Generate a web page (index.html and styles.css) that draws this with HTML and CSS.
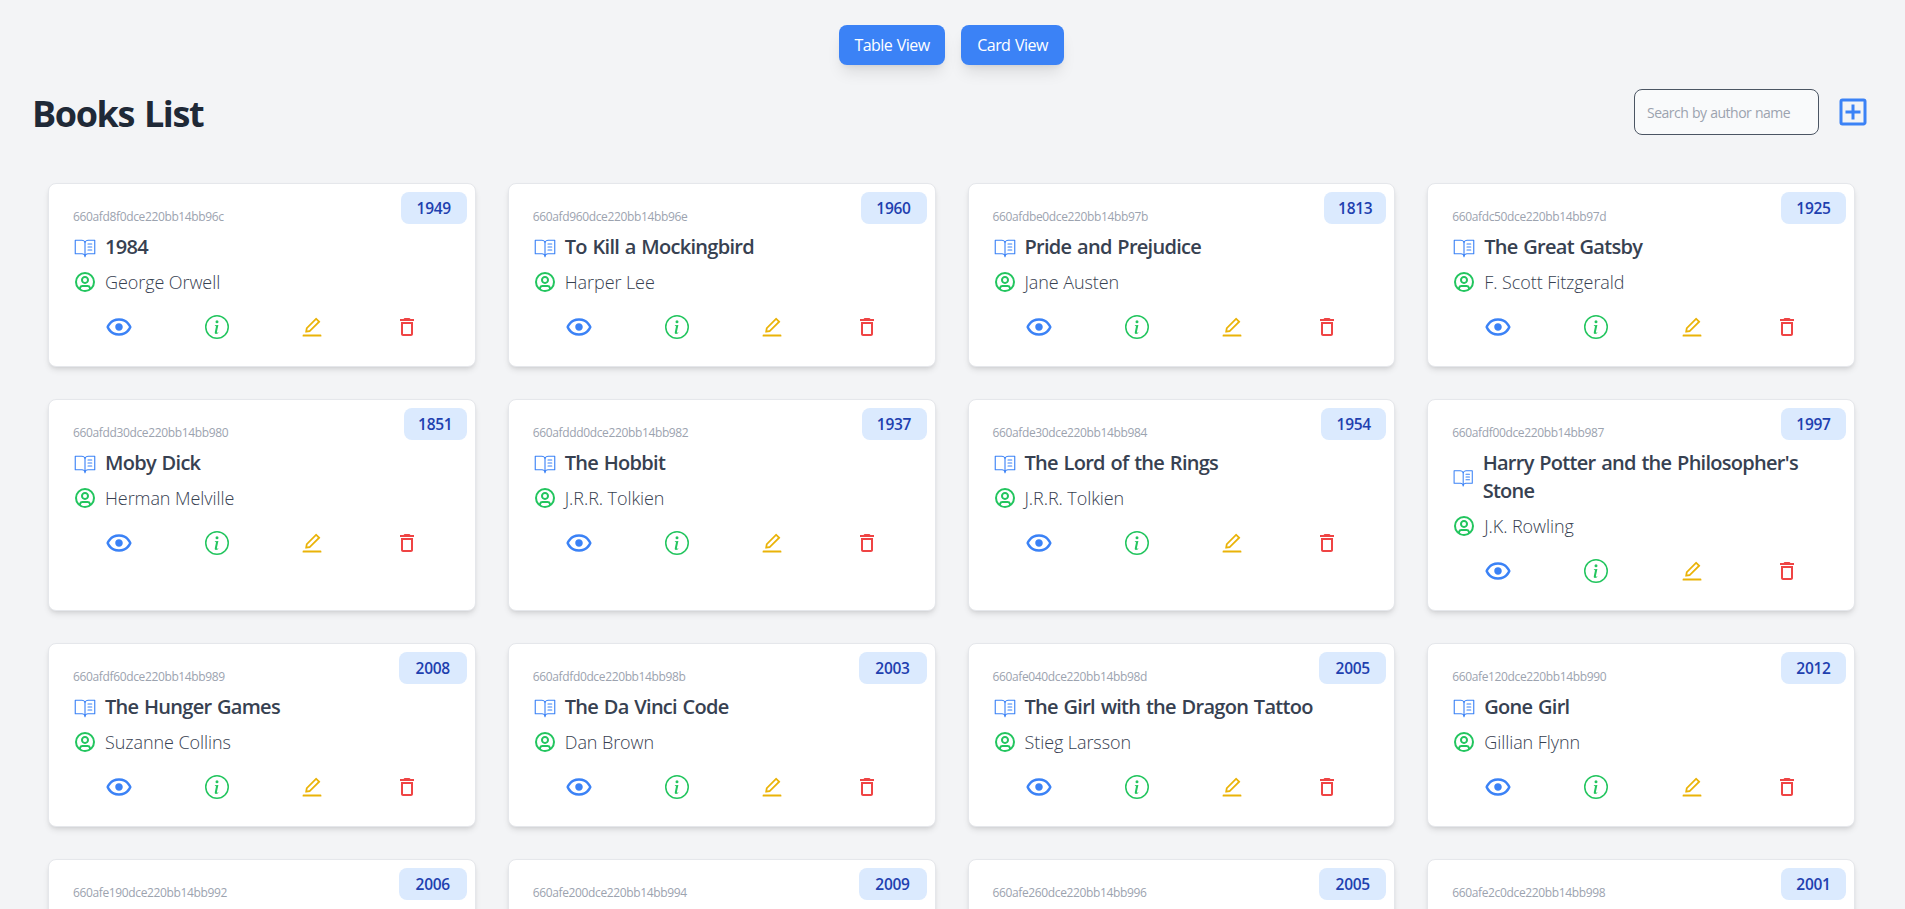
FILE: index.html
```
<!DOCTYPE html>
<html lang="en">
<head>
<meta charset="utf-8">
<title>Books List</title>
<link rel="stylesheet" href="styles.css">
</head>
<body>
<svg class="sprite" aria-hidden="true">
  <symbol id="book" viewBox="0 0 256 256"><path d="M232 50h-72a38 38 0 0 0-32 17.550A38 38 0 0 0 96 50H24a6 6 0 0 0-6 6v144a6 6 0 0 0 6 6h72a26 26 0 0 1 26 26 6 6 0 0 0 12 0 26 26 0 0 1 26-26h72a6 6 0 0 0 6-6V56a6 6 0 0 0-6-6ZM96 194H30V62h66a26 26 0 0 1 26 26v116.310A37.860 37.860 0 0 0 96 194Zm130 0h-66a37.870 37.870 0 0 0-26 10.320V88a26 26 0 0 1 26-26h66ZM160 90h40a6 6 0 0 1 0 12h-40a6 6 0 0 1 0-12Zm46 38a6 6 0 0 1-6 6h-40a6 6 0 0 1 0-12h40a6 6 0 0 1 6 6Zm0 32a6 6 0 0 1-6 6h-40a6 6 0 0 1 0-12h40a6 6 0 0 1 6 6Z"/></symbol>
  <symbol id="person" viewBox="0 0 24 24"><path d="M12 2a10 10 0 1 0 0 20 10 10 0 0 0 0-20zM8 18.900V18.500c0-.830.670-1.500 1.500-1.500h5c.830 0 1.500.670 1.500 1.500v.430a7.950 7.950 0 0 1-8-.030zm9.900-1.490A3.500 3.500 0 0 0 14.500 15h-5a3.500 3.500 0 0 0-3.400 2.410A8 8 0 1 1 17.900 17.410zM12 6a3.910 3.910 0 0 0-4 4 3.910 3.910 0 0 0 4 4 3.910 3.910 0 0 0 4-4 3.910 3.910 0 0 0-4-4zm0 6a1.910 1.910 0 0 1-2-2 1.910 1.910 0 0 1 2-2 1.910 1.910 0 0 1 2 2 1.910 1.910 0 0 1-2 2z"/></symbol>
  <symbol id="eye" viewBox="0 0 24 24"><path d="M12 9a3.020 3.020 0 0 0-3 3c0 1.642 1.358 3 3 3 1.641 0 3-1.358 3-3 0-1.641-1.359-3-3-3z"/><path d="M12 5c-7.633 0-9.927 6.617-9.948 6.684L1.946 12l.105.316C2.073 12.383 4.367 19 12 19s9.927-6.617 9.948-6.684l.106-.316-.105-.316C21.927 11.617 19.633 5 12 5zm0 12c-5.351 0-7.424-3.846-7.926-5C4.578 10.842 6.652 7 12 7c5.351 0 7.424 3.846 7.926 5-.504 1.158-2.578 5-7.926 5z"/></symbol>
  <symbol id="info" viewBox="0 0 16 16"><path d="M8 15A7 7 0 1 1 8 1a7 7 0 0 1 0 14zm0 1A8 8 0 1 0 8 0a8 8 0 0 0 0 16z"/><path d="m8.930 6.588-2.290.287-.082.380.450.083c.294.070.352.176.288.469l-.738 3.468c-.194.897.105 1.319.808 1.319.545 0 1.178-.252 1.465-.598l.088-.416c-.2.176-.492.246-.686.246-.275 0-.375-.193-.304-.533L8.930 6.588zM9 4.500a1 1 0 1 1-2 0 1 1 0 0 1 2 0z"/></symbol>
  <symbol id="edit" viewBox="0 0 1024 1024"><path d="M257.7 752c2 0 4-.2 6-.5L431.9 722c2-.4 3.900-1.300 5.300-2.800l423.900-423.900a9.960 9.960 0 0 0 0-14.100L694.900 114.900c-1.900-1.900-4.400-2.900-7.100-2.900s-5.200 1-7.100 2.900L256.800 538.800c-1.500 1.500-2.400 3.300-2.800 5.300l-29.500 168.200a33.500 33.500 0 0 0 9.400 29.800c6.600 6.400 14.900 9.900 23.800 9.900zm67.400-174.400L687.800 215l73.300 73.300-362.700 362.600-88.900 15.700 15.600-89zM880 836H144c-17.700 0-32 14.300-32 32v36c0 4.400 3.600 8 8 8h784c4.400 0 8-3.600 8-8v-36c0-17.700-14.300-32-32-32z"/></symbol>
  <symbol id="trash" viewBox="0 0 24 24"><path d="M6 19c0 1.100.900 2 2 2h8c1.100 0 2-.900 2-2V7H6v12zM8 9h8v10H8V9zm7.500-5-1-1h-5l-1 1H5v2h14V4z"/></symbol>
</svg>
<nav class="views"><button class="view-btn">Table View</button><button class="view-btn view-btn-card">Card View</button></nav>
<header class="header">
  <h1 class="heading">Books List</h1>
  <div class="tools">
    <input class="search" type="text" placeholder="Search by author name">
    <svg class="add" viewBox="0 0 24 24"><path d="M19 3H5a2 2 0 0 0-2 2v14a2 2 0 0 0 2 2h14c1.100 0 2-.900 2-2V5a2 2 0 0 0-2-2zm0 16H5V5h14v14zm-8-2h2v-4h4v-2h-4V7h-2v4H7v2h4z"/></svg>
  </div>
</header>
<main class="grid" id="grid"></main>
<script src="books.js"></script>
</body>
</html>
```
FILE: styles.css
```
* { box-sizing: border-box; }
html { background: #f3f4f6; }
body {
  margin: 0;
  height: 909px;
  overflow: hidden;
  padding: 25px 34px 0 32px;
  background: #f3f4f6;
  font-family: "Open Sans", "Noto Sans", sans-serif;
  font-size: 16px;
  line-height: 24px;
}
svg { display: block; fill: currentColor; flex: none; }
.sprite { position: absolute; width: 0; height: 0; }
.views { display: flex; justify-content: center; gap: 16px; }
.view-btn {
  width: 106px;
  height: 40px;
  padding: 0;
  border: 0;
  border-radius: 8px;
  background: #3b82f6;
  color: #fff;
  font: inherit;
  letter-spacing: -0.55px;
  word-spacing: 1px;
  box-shadow: 0 10px 15px -3px rgba(0,0,0,.1), 0 4px 6px -4px rgba(0,0,0,.1);
}
.view-btn-card { width: 103px; }
.header { display: flex; justify-content: space-between; align-items: center; height: 94px; }
.heading { margin: 4px 0 0; font-size: 36px; line-height: 40px; font-weight: 700; color: #1f2937; letter-spacing: -1.4px; word-spacing: 2px; }
.tools { display: flex; align-items: center; gap: 16px; }
.search {
  width: 185px;
  height: 46px;
  padding: 0 12px;
  border: 1px solid #4b5563;
  border-radius: 8px;
  background: #f9fafb;
  font: 14px "Open Sans", sans-serif;
  letter-spacing: -0.5px;
  word-spacing: 0.5px;
}
.search::placeholder { color: #9ca3af; opacity: 1; }
.add { width: 36px; height: 36px; color: #3b82f6; }
.grid {
  display: grid;
  grid-template-columns: repeat(4, minmax(0, 1fr));
  gap: 32px;
  padding: 24px 16px;
}
.card {
  position: relative;
  min-height: 184px;
  padding: 25px 24px 24px;
  border: 1px solid #e5e7eb;
  border-radius: 8px;
  background: #fff;
  box-shadow: 0 4px 6px -1px rgba(0,0,0,.1), 0 2px 4px -2px rgba(0,0,0,.1);
}
.year {
  position: absolute;
  top: 8px;
  right: 8px;
  height: 32px;
  border-radius: 8px;
  background: #dbeafe;
  color: #1e40af;
  font-weight: 600;
  font-size: 15.5px;
  line-height: 33px;
  text-align: center;
  letter-spacing: -0.3px;
}
.id { font-size: 12px; line-height: 16px; color: #9ca3af; letter-spacing: -0.36px; }
.row { display: flex; align-items: center; gap: 8px; margin-top: 8px; }
.row + .row { margin-top: 7px; }
.row svg { width: 24px; height: 24px; flex-shrink: 1; }
.title { font-size: 20px; line-height: 28px; font-weight: 600; color: #374151; letter-spacing: -0.72px; word-spacing: 1.2px; }
.author { font-size: 18px; line-height: 28px; font-weight: 300; color: #374151; letter-spacing: -0.08px; }
.blue { color: #3b82f6; }
.green { color: #22c55e; }
.yellow { color: #eab308; }
.red { color: #ef4444; }
.actions { display: flex; justify-content: space-between; align-items: center; margin-top: 16px; padding: 0 31.4px 0 31.2px; }
```
FILE: books.js
```
const books = [
  ["660afd8f0dce220bb14bb96c", "1984", "George Orwell", 1949, 66],
  ["660afd960dce220bb14bb96e", "To Kill a Mockingbird", "Harper Lee", 1960, 66],
  ["660afdbe0dce220bb14bb97b", "Pride and Prejudice", "Jane Austen", 1813, 62],
  ["660afdc50dce220bb14bb97d", "The Great Gatsby", "F. Scott Fitzgerald", 1925, 65],
  ["660afdd30dce220bb14bb980", "Moby Dick", "Herman Melville", 1851, 63],
  ["660afddd0dce220bb14bb982", "The Hobbit", "J.R.R. Tolkien", 1937, 65],
  ["660afde30dce220bb14bb984", "The Lord of the Rings", "J.R.R. Tolkien", 1954, 65],
  ["660afdf00dce220bb14bb987", "Harry Potter and the Philosopher's Stone", "J.K. Rowling", 1997, 65],
  ["660afdf60dce220bb14bb989", "The Hunger Games", "Suzanne Collins", 2008, 68],
  ["660afdfd0dce220bb14bb98b", "The Da Vinci Code", "Dan Brown", 2003, 68],
  ["660afe040dce220bb14bb98d", "The Girl with the Dragon Tattoo", "Stieg Larsson", 2005, 67],
  ["660afe120dce220bb14bb990", "Gone Girl", "Gillian Flynn", 2012, 65],
  ["660afe190dce220bb14bb992", "The Road", "Cormac McCarthy", 2006, 68],
  ["660afe200dce220bb14bb994", "The Help", "Kathryn Stockett", 2009, 68],
  ["660afe260dce220bb14bb996", "The Book Thief", "Markus Zusak", 2005, 67],
  ["660afe2c0dce220bb14bb998", "Life of Pi", "Yann Martel", 2001, 65]
];
const icon = (name, color, size) =>
  `<svg class="${color}" width="${size}" height="${size}"><use href="#${name}"/></svg>`;
document.getElementById("grid").innerHTML = books.map(([id, title, author, year, w]) => `
<article class="card">
  <div class="year" style="width:${w}px">${year}</div>
  <div class="id">${id}</div>
  <div class="row">${icon("book", "blue", 24)}<div class="title">${title}</div></div>
  <div class="row">${icon("person", "green", 24)}<div class="author">${author}</div></div>
  <div class="actions">${icon("eye", "blue", 30)}${icon("info", "green", 24)}${icon("edit", "yellow", 24)}${icon("trash", "red", 24)}</div>
</article>`).join("");
```
